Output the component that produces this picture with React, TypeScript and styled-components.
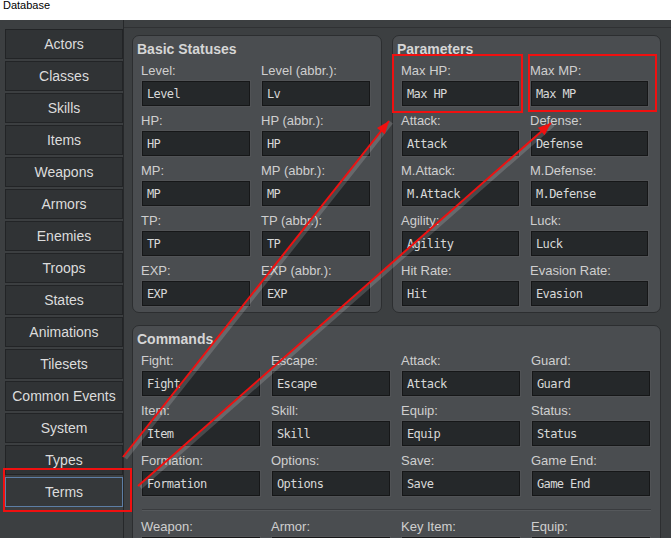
import styled, { createGlobalStyle } from 'styled-components';

const Global = createGlobalStyle`
  html, body {
    margin: 0;
    padding: 0;
    width: 671px;
    height: 538px;
    overflow: hidden;
    background: #3c3f41;
  }
`;

const Window = styled.div`
  position: relative;
  width: 671px;
  height: 538px;
  overflow: hidden;
  background: #3c3f41;
  font-family: "Liberation Sans", Arial, sans-serif;
`;

const TitleBar = styled.div`
  height: 20px;
  background: #ffffff;
  color: #000;
  font-size: 11px;
  line-height: 11px;
  padding-left: 3px;
`;

const Body = styled.div`
  display: flex;
  height: 518px;
`;

const Sidebar = styled.div`
  width: 118px;
  flex: none;
  padding: 9px 0 0 5px;
  border-right: 1px solid #26282a;
  display: flex;
  flex-direction: column;
  gap: 2px;
`;

const NavButton = styled.div<{ active?: boolean }>`
  height: 28px;
  border: 1px solid ${({ active }) => (active ? '#5d7ea5' : '#222426')};
  background: ${({ active }) => (active ? '#35383a' : '#303335')};
  color: #dcdcdc;
  font-size: 14px;
  display: flex;
  align-items: center;
  justify-content: center;
`;

const Content = styled.div`
  flex: 1;
  margin-top: 7px;
  border-top: 1px solid #2f3133;
  padding: 7px 0 0 8px;
  display: flex;
  flex-direction: column;
  gap: 12px;
`;

const TopRow = styled.div`
  display: flex;
  gap: 10px;
`;

const Panel = styled.section<{ w: number }>`
  width: ${({ w }) => w}px;
  box-sizing: border-box;
  background: #4a4d50;
  border: 1px solid #2c2e30;
  border-radius: 7px;
  padding: 4px 0 6px 4px;
`;

const PanelTitle = styled.div`
  font-weight: bold;
  font-size: 14px;
  line-height: 18px;
  color: #d6d6d6;
  margin-bottom: 4px;
`;

const FieldGrid = styled.div<{ col: number; n: number }>`
  display: grid;
  grid-template-columns: repeat(${({ n }) => n}, ${({ col }) => col}px);
  column-gap: 12px;
  row-gap: 6px;
  padding-left: 5px;
`;

const Field = styled.div`
  display: flex;
  flex-direction: column;
  gap: 1px;
`;

const Label = styled.div`
  font-size: 13px;
  line-height: 18px;
  color: #cfcfcf;
  margin-left: -1px;
  white-space: nowrap;
`;

const Input = styled.div`
  height: 23px;
  box-sizing: content-box;
  background: #25282a;
  border: 1px solid #161718;
  box-shadow: 0 0 0 1px rgba(255, 255, 255, 0.04);
  color: #d8d8d8;
  font-family: "DejaVu Sans Mono", "Liberation Mono", monospace;
  font-size: 12px;
  letter-spacing: -0.6px;
  line-height: 24px;
  padding-left: 4px;
  white-space: nowrap;
  overflow: hidden;
`;

const Divider = styled.div`
  margin: 13px 9px 7px 5px;
  height: 1px;
  background: #393b3e;
  border-bottom: 1px solid #55585b;
`;

const Overlay = styled.svg`
  position: absolute;
  left: 0;
  top: 0;
  pointer-events: none;
`;

type F = [string, string];

const basic: F[] = [
  ['Level:', 'Level'], ['Level (abbr.):', 'Lv'],
  ['HP:', 'HP'], ['HP (abbr.):', 'HP'],
  ['MP:', 'MP'], ['MP (abbr.):', 'MP'],
  ['TP:', 'TP'], ['TP (abbr.):', 'TP'],
  ['EXP:', 'EXP'], ['EXP (abbr.):', 'EXP'],
];

const params: F[] = [
  ['Max HP:', 'Max HP'], ['Max MP:', 'Max MP'],
  ['Attack:', 'Attack'], ['Defense:', 'Defense'],
  ['M.Attack:', 'M.Attack'], ['M.Defense:', 'M.Defense'],
  ['Agility:', 'Agility'], ['Luck:', 'Luck'],
  ['Hit Rate:', 'Hit'], ['Evasion Rate:', 'Evasion'],
];

const commands: F[] = [
  ['Fight:', 'Fight'], ['Escape:', 'Escape'], ['Attack:', 'Attack'], ['Guard:', 'Guard'],
  ['Item:', 'Item'], ['Skill:', 'Skill'], ['Equip:', 'Equip'], ['Status:', 'Status'],
  ['Formation:', 'Formation'], ['Options:', 'Options'], ['Save:', 'Save'], ['Game End:', 'Game End'],
];

// only the label row is visible at the bottom edge
const menus: F[] = [
  ['Weapon:', ''], ['Armor:', ''], ['Key Item:', ''], ['Equip:', ''],
];

const nav = [
  'Actors', 'Classes', 'Skills', 'Items', 'Weapons', 'Armors', 'Enemies', 'Troops',
  'States', 'Animations', 'Tilesets', 'Common Events', 'System', 'Types', 'Terms',
];

const Fields = ({ items, col, n }: { items: F[]; col: number; n: number }) => (
  <FieldGrid col={col} n={n}>
    {items.map(([l, v], i) => (
      <Field key={i}>
        <Label>{l}</Label>
        <Input>{v}</Input>
      </Field>
    ))}
  </FieldGrid>
);

const head = (x1: number, y1: number, x2: number, y2: number) => {
  const a = Math.atan2(y2 - y1, x2 - x1);
  const len = 13;
  const w = 5;
  const bx = x2 - len * Math.cos(a);
  const by = y2 - len * Math.sin(a);
  const px = -Math.sin(a) * w;
  const py = Math.cos(a) * w;
  return `${x2},${y2} ${bx + px},${by + py} ${bx - px},${by - py}`;
};

const arrows = [
  [123, 457, 389, 121],
  [138, 486, 551, 123],
];

export default function App() {
  return (
    <Window>
      <Global />
      <TitleBar>Database</TitleBar>
      <Body>
        <Sidebar>
          {nav.map((n) => (
            <NavButton key={n} active={n === 'Terms'}>{n}</NavButton>
          ))}
        </Sidebar>
        <Content>
          <TopRow>
            <Panel w={250}>
              <PanelTitle>Basic Statuses</PanelTitle>
              <Fields items={basic} col={108} n={2} />
            </Panel>
            <Panel w={269}>
              <PanelTitle>Parameters</PanelTitle>
              <Fields items={params} col={117} n={2} />
            </Panel>
          </TopRow>
          <Panel w={529}>
            <PanelTitle>Commands</PanelTitle>
            <Fields items={commands} col={118} n={4} />
            <Divider />
            <Fields items={menus} col={118} n={4} />
          </Panel>
        </Content>
      </Body>
      <Overlay width={671} height={538}>
        {arrows.map(([x1, y1, x2, y2], i) => (
          <g key={i}>
            <line x1={x1 + 2} y1={y1 + 1} x2={x2 + 2} y2={y2 + 1} stroke="rgba(255,255,255,0.16)" strokeWidth={5} />
            <line x1={x1} y1={y1} x2={x2} y2={y2} stroke="#f01010" strokeWidth={2} />
            <polygon points={head(x1, y1, x2, y2)} fill="#f01010" />
          </g>
        ))}
        <rect x={4} y={469} width={127} height={42} fill="none" stroke="#f01010" strokeWidth={2} />
        <rect x={393} y={55} width={129} height={57} fill="none" stroke="#f01010" strokeWidth={2} />
        <rect x={529} y={55} width={127} height={56} fill="none" stroke="#f01010" strokeWidth={2} />
      </Overlay>
    </Window>
  );
}
